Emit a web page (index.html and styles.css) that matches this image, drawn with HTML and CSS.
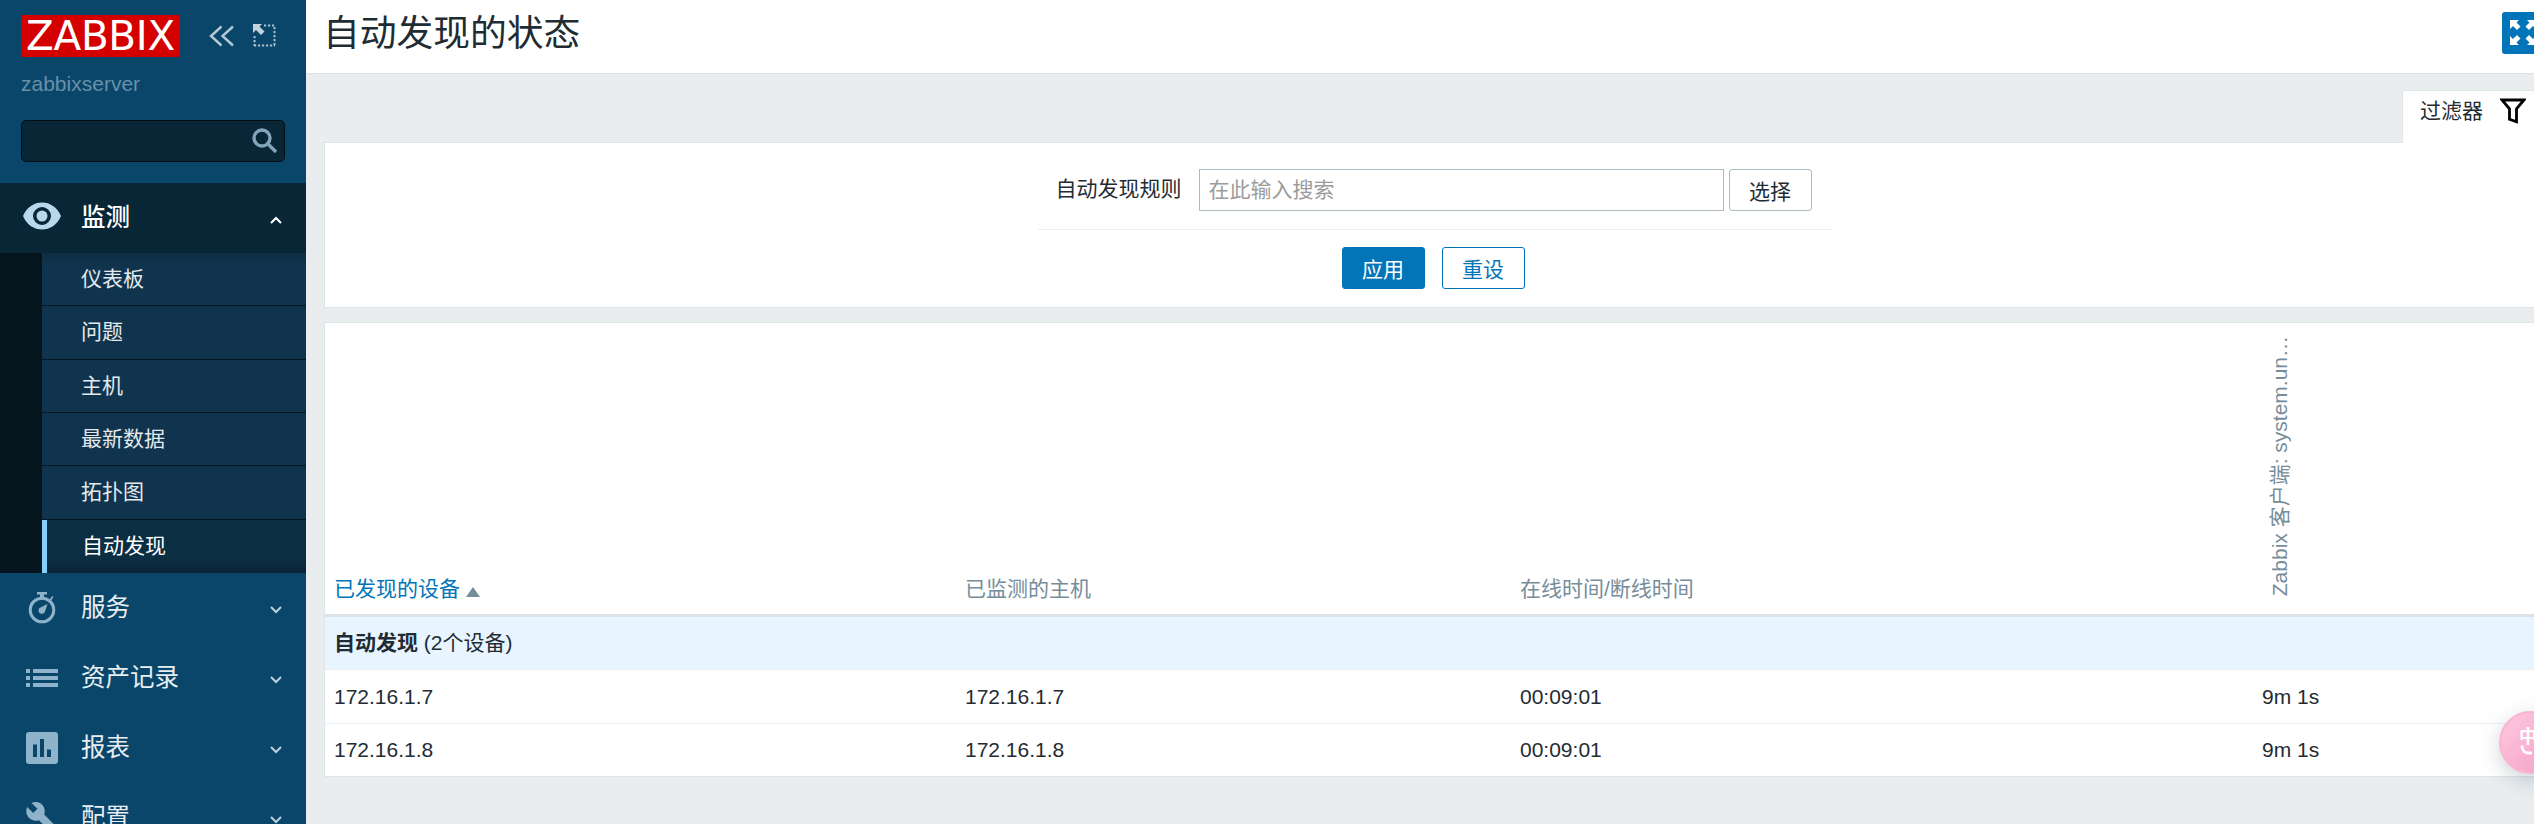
FILE: index.html
```
<!DOCTYPE html>
<html lang="zh-CN">
<head>
<meta charset="utf-8">
<title>自动发现的状态</title>
<link rel="stylesheet" href="styles.css">
</head>
<body>
<div class="page">
  <aside class="sidebar">
    <div class="brand">
      <div class="logo">ZABBIX</div>
      <svg class="ico-collapse" width="26" height="22" viewBox="0 0 26 22"><path d="M12.500 1.500L2 11l10.500 9.500M24 1.500L13.500 11 24 20.500"/></svg>
      <svg class="ico-kiosk" width="23" height="23" viewBox="0 0 23 23"><path class="dots" d="M11 1.500H23M21.500 3V22M1.500 12V22M1 21.500H22"/><path class="arrow" d="M0 0H9L6.500 2.500 11.500 7.500 8 11 3 6 0 9Z"/></svg>
    </div>
    <div class="server">zabbixserver</div>
    <div class="search">
      <svg width="26" height="26" viewBox="0 0 26 26"><circle cx="10" cy="10" r="8"/><path d="M15.500 15.500L24 24"/></svg>
    </div>
    <nav class="menu">
      <div class="item open">
        <svg class="icon" width="40" height="28" viewBox="0 0 40 28"><path d="M1 14C5 5 12 .5 20 .5S35 5 39 14C35 23 28 27.500 20 27.500S5 23 1 14ZM20 5a9 9 0 1 0 0 18 9 9 0 0 0 0-18Zm0 3.500a5.500 5.500 0 1 1 0 11 5.500 5.500 0 0 1 0-11Z" fill-rule="evenodd"/></svg>
        <span>监测</span>
        <svg class="chev" width="12" height="8" viewBox="0 0 12 8"><path d="M1 7l5-5 5 5"/></svg>
      </div>
      <div class="submenu">
        <div class="sub">仪表板</div>
        <div class="sub">问题</div>
        <div class="sub">主机</div>
        <div class="sub">最新数据</div>
        <div class="sub">拓扑图</div>
        <div class="sub current">自动发现</div>
      </div>
      <div class="item">
        <svg class="icon" width="40" height="34" viewBox="0 0 40 34"><circle class="ring" cx="20" cy="19" r="11.800"/><path d="M15 1h10v2.500h-3V6h-4V3.500h-3ZM27.500 8.500L30.500 5l1 .8-2.500 4ZM25.500 13l-2.400 7.200a3.300 3.300 0 1 1-4-4Z"/></svg>
        <span>服务</span>
        <svg class="chev" width="12" height="8" viewBox="0 0 12 8"><path d="M1 1l5 5 5-5"/></svg>
      </div>
      <div class="item">
        <svg class="icon" width="40" height="18" viewBox="0 0 40 18"><path d="M4 0h4v4H4ZM11 0h25v4H11ZM4 7h4v4H4ZM11 7h25v4H11ZM4 14h4v4H4ZM11 14h25v4H11Z"/></svg>
        <span>资产记录</span>
        <svg class="chev" width="12" height="8" viewBox="0 0 12 8"><path d="M1 1l5 5 5-5"/></svg>
      </div>
      <div class="item">
        <svg class="icon" width="40" height="32" viewBox="0 0 40 32"><path fill-rule="evenodd" d="M7 0h26a3 3 0 0 1 3 3v26a3 3 0 0 1-3 3H7a3 3 0 0 1-3-3V3a3 3 0 0 1 3-3ZM11 12.500V25h4V12.500ZM18 7v18h4V7ZM25 17.500V25h4v-7.500Z"/></svg>
        <span>报表</span>
        <svg class="chev" width="12" height="8" viewBox="0 0 12 8"><path d="M1 1l5 5 5-5"/></svg>
      </div>
      <div class="item">
        <svg class="icon" width="40" height="34" viewBox="0 0 40 34"><path d="M9.500 2C15-.5 20 2 22 6.500c1 2.500 1 5 .2 7L36 27.500c1 1 1 2 0 3L33.500 33c-1 1-2 1-3 0L17 19.200c-3.500 1.200-7 .3-9.800-2.200C4 14 3.500 9.500 5.200 6l6 6 4.300-4.200Z"/></svg>
        <span>配置</span>
        <svg class="chev" width="12" height="8" viewBox="0 0 12 8"><path d="M1 1l5 5 5-5"/></svg>
      </div>
    </nav>
  </aside>

  <div class="wrapper">
    <header class="header">
      <h1>自动发现的状态</h1>
      <div class="fullscreen">
        <svg width="26" height="25" viewBox="0 0 26 25"><path d="M0 0h9L6.500 2.500 10.500 6.500 7 10 3 6 0 9ZM26 0h-9l2.500 2.500L15.500 6.500 19 10l4-4 3 3ZM0 25h9l-2.500-2.500 4-4L7 15l-4 4-3-3ZM26 25h-9l2.500-2.500-4-4L19 15l4 4 3-3Z"/></svg>
      </div>
    </header>
    <main class="main">
      <div class="tabs">
        <div class="tab">过滤器
          <svg width="26" height="26" viewBox="0 0 26 26"><path d="M2 2H24L16.500 10.800V23.800L9.500 21.300V10.800Z"/></svg>
        </div>
      </div>
      <section class="filter">
        <div class="fields">
          <label>自动发现规则</label>
          <div class="input">在此输入搜索</div>
          <div class="btn grey">选择</div>
        </div>
        <div class="actions">
          <div class="btn primary">应用</div>
          <div class="btn alt">重设</div>
        </div>
      </section>
      <section class="table">
        <div class="row head">
          <div class="sorted">已发现的设备<i class="sort"></i></div>
          <div>已监测的主机</div>
          <div>在线时间/断线时间</div>
          <div class="vcell"><span class="vertical">Zabbix 客户端: system.un…</span></div>
        </div>
        <div class="row group"><div><b>自动发现</b> (2个设备)</div></div>
        <div class="row"><div>172.16.1.7</div><div>172.16.1.7</div><div>00:09:01</div><div>9m 1s</div></div>
        <div class="row last"><div>172.16.1.8</div><div>172.16.1.8</div><div>00:09:01</div><div>9m 1s</div></div>
      </section>
    </main>
  </div>
  <div class="ime"><span>中</span><svg width="18" height="10" viewBox="0 0 18 10"><path d="M2 0.500C2 6 5 8 8 8H12"/></svg></div>
</div>
</body>
</html>
```
FILE: styles.css
```
* { box-sizing: border-box; }
html, body { margin: 0; height: 824px; overflow: hidden; }
body {
  font: 21px/30px "Liberation Sans", "Noto Sans CJK SC", sans-serif;
  color: #1f2c33;
  background: #e9edf0;
}
svg { display: block; flex: none; }
.page { position: relative; display: flex; width: 2562px; height: 824px; overflow: hidden; }

/* sidebar */
.sidebar { flex: none; width: 306px; background: #0a466a; }
.brand { display: flex; align-items: flex-start; padding: 15px 0 0 21px; height: 66px; }
.logo {
  width: 159px; height: 42px; background: #d40000; color: #fff; text-align: center;
  font: 40.500px/43px "DejaVu Sans", sans-serif; letter-spacing: -0.300px; white-space: nowrap;
}
.ico-collapse { margin: 10px 0 0 29px; fill: none; stroke: #b5c8d4; stroke-width: 2.400; }
.ico-kiosk { margin: 9px 0 0 18px; }
.dots { fill: none; stroke: #a9bfcd; stroke-width: 2; stroke-dasharray: 2.200 1.800; }
.arrow { fill: #c3d2db; }
.server { padding-left: 21px; height: 54px; line-height: 36px; color: #6790a9; }
.search {
  width: 264px; height: 42px; margin-left: 21px; padding-right: 6px;
  display: flex; align-items: center; justify-content: flex-end;
  background: #092637; border: 1px solid #020c13; border-radius: 5px;
}
.search svg { fill: none; stroke: #82a5bc; stroke-width: 3.400; }
.menu { margin-top: 21px; }
.item { display: flex; align-items: center; height: 70px; padding: 0 24px 0 22px; color: #e8eef2; font-size: 24.500px; }
.item span { flex: 1; margin-left: 19px; line-height: 36px; }
.item .icon { fill: #8fb3ca; }
.ring { fill: none; stroke: #8fb3ca; stroke-width: 3; }
.chev { fill: none; stroke: #bdd0dc; stroke-width: 2; margin-top: 3px; }
.open { background: #092637; color: #fff; font-weight: 500; }
.open .icon { fill: #b8d8ee; margin-top: -4px; }
.open .chev { stroke: #fff; }
.submenu {
  height: 320px; padding-left: 42px; display: grid; grid-template-rows: repeat(6, 1fr);
  background: linear-gradient(90deg, #05151e 42px, #10344d 42px);
}
.sub { padding-left: 39px; line-height: 51px; color: #e3e9ed; border-bottom: 1px solid #05151e; }
.sub:first-child { background: linear-gradient(#0d2e43, #10344d 14px); }
.current { padding-left: 35px; border-left: 5px solid #85cfff; border-bottom: 0; color: #fff; background: linear-gradient(#0b2e43 38px, #0a2435); }

/* header */
.wrapper { flex: 1; min-width: 0; }
.header { display: flex; justify-content: space-between; height: 74px; padding: 12px 18px 0 17px; background: #fff; border-bottom: 1px solid #dce2e5; }
h1 { margin: 0; font-size: 36.750px; font-weight: 400; line-height: 44px; }
.fullscreen { width: 42px; height: 42px; padding: 8px; border-radius: 3px; background: #0275b8; fill: #fff; }

/* filter */
.main { padding: 16px 18px 0; }
.tabs { display: flex; justify-content: flex-end; height: 52px; }
.tab {
  display: flex; align-items: flex-start; gap: 17px; width: 142px; height: 53px; margin-bottom: -1px;
  padding: 5px 0 0 17px; background: #fff; border: 1px solid #dfe4e7; border-bottom: 0;
  border-radius: 3px 3px 0 0; white-space: nowrap; position: relative; z-index: 1;
}
.tab svg { margin-top: 2px; fill: none; stroke: #000; stroke-width: 2.800; }
.filter { height: 166px; padding-top: 26px; background: #fff; border: 1px solid #dfe4e7; }
.fields { display: flex; width: 793px; height: 61px; margin: 0 auto; padding-left: 18px; border-bottom: 1px solid #ebeef0; }
.fields label { width: 143px; line-height: 40px; }
.input { width: 525px; height: 42px; padding-left: 9px; line-height: 39px; color: #9b9b9b; border: 1px solid #acbbc2; }
.btn { width: 83px; height: 42px; text-align: center; line-height: 43px; border: 1px solid #acbbc2; border-radius: 3px; }
.grey { margin-left: 5px; }
.actions { display: flex; justify-content: center; gap: 17px; padding: 17px 2px 0 0; }
.primary { background: #0275b8; border-color: #0275b8; color: #fff; }
.alt { color: #0275b8; border-color: #0275b8; }

/* table */
.table { margin-top: 14px; background: #fff; border: 1px solid #dfe4e7; }
.row { display: grid; grid-template-columns: 631px 555px 742px 1fr; align-items: center; height: 54px; padding-left: 9px; border-bottom: 1px solid #ebeef0; }
.last { height: 52px; border-bottom: 0; }
.head { height: 294px; align-items: end; padding-bottom: 10px; color: #768d99; border-bottom: 3px solid #dce2e5; }
.sorted { display: flex; align-items: center; color: #0275b8; }
.sort { margin: 5px 0 0 6px; border: 7px solid transparent; border-top: 0; border-bottom: 10px solid #768d99; }
.group { height: 53px; grid-template-columns: 1fr; background: #e8f4ff; }
.vcell { height: 270px; display: flex; align-items: flex-end; padding: 0 0 8px 3px; }
.vertical { writing-mode: vertical-rl; text-orientation: sideways; transform: rotate(180deg); white-space: nowrap; line-height: 30px; }

/* input method bubble */
.ime {
  position: absolute; left: 2499px; top: 711px; width: 63px; height: 63px; border-radius: 50%;
  border: 2px solid #f9b4d0; background: linear-gradient(135deg, #ffc8df, #f49fc3);
  box-shadow: 0 6px 20px rgba(60, 80, 90, .25);
}
.ime span { display: block; margin: 11px 0 0 18px; font: 700 18px/22px "Noto Sans CJK SC", sans-serif; color: #fff; }
.ime svg { margin: -1px 0 0 19px; fill: none; stroke: #fff; stroke-width: 2.800; }
```
